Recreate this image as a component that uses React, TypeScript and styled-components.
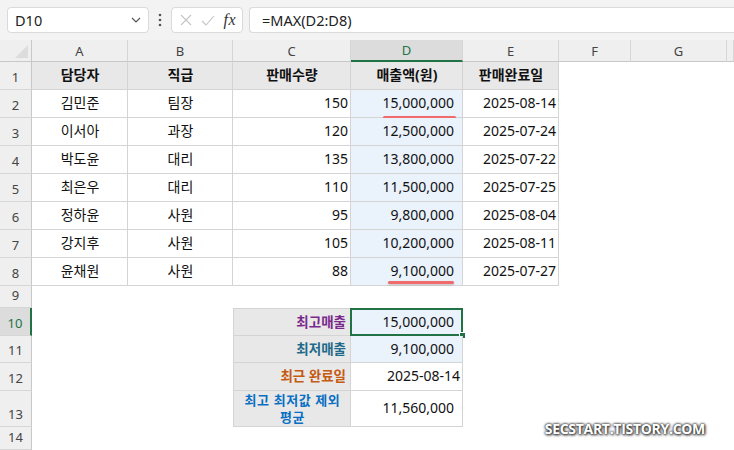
import React from "react";
import styled, { createGlobalStyle, css } from "styled-components";

const GlobalStyle = createGlobalStyle`
  html, body {
    margin: 0;
    padding: 0;
    background: #ffffff;
    overflow: hidden;
  }
  body {
    font-family: "Noto Sans", "Noto Sans CJK KR", sans-serif;
  }
`;

const GREEN = "#217346";
const LINE = "#d4d4d4";

const Page = styled.div`
  position: relative;
  width: 734px;
  height: 450px;
  display: flex;
  flex-direction: column;
  background: #ffffff;
`;

const Toolbar = styled.div`
  height: 40px;
  flex: none;
  display: flex;
  align-items: center;
  padding: 0 0 0 7px;
  background: #f3f3f3;
  box-sizing: border-box;
`;

const Box = styled.div<{ $w?: number }>`
  height: 26px;
  box-sizing: border-box;
  background: #ffffff;
  border: 1px solid #dadada;
  border-radius: 4px;
  display: flex;
  align-items: center;
  ${(p) =>
    p.$w
      ? css`
          width: ${p.$w}px;
          flex: none;
        `
      : css`
          flex: 1;
          border-right: none;
          border-radius: 4px 0 0 4px;
        `}
`;

const NameBox = styled(Box)`
  justify-content: space-between;
  padding: 0 7px 0 7px;
  font-size: 14.5px;
  color: #222;
`;

const Dots = styled.div`
  width: 22px;
  display: flex;
  justify-content: center;
`;

const EditBox = styled(Box)`
  justify-content: space-between;
  padding: 0 6px 0 8px;
  margin-right: 6px;
`;

const Fx = styled.span`
  font-family: "Liberation Serif", serif;
  font-style: italic;
  font-size: 16px;
  color: #333;
  letter-spacing: 0.5px;
`;

const FormulaBox = styled(Box)`
  padding-left: 12px;
  font-size: 14.5px;
  color: #222;
`;

const Sheet = styled.div`
  flex: 1;
  display: grid;
  grid-template-columns: 32px 96px 105px 118px 112px 96px 72px 96px 1fr;
  grid-template-rows: 22px repeat(8, 28px) 22px 28px 27px 28px 36px 1fr;
  background: #ffffff;
`;

const Corner = styled.div`
  background: #efefef;
  border-right: 1px solid #c8c8c8;
  border-bottom: 1px solid #c8c8c8;
  box-sizing: border-box;
  position: relative;
  &::after {
    content: "";
    position: absolute;
    right: 3px;
    bottom: 3px;
    width: 0;
    height: 0;
    border-left: 13px solid transparent;
    border-bottom: 13px solid #dcdcdc;
  }
`;

const ColHeader = styled.div<{ $active?: boolean }>`
  box-sizing: border-box;
  display: flex;
  align-items: center;
  justify-content: center;
  font-size: 13px;
  color: ${(p) => (p.$active ? GREEN : "#444")};
  background: ${(p) => (p.$active ? "#dcdcdc" : "#efefef")};
  border-right: 1px solid #d6d6d6;
  border-bottom: ${(p) => (p.$active ? `2px solid ${GREEN}` : "1px solid #c8c8c8")};
`;

const RowHeader = styled.div<{ $active?: boolean; $row: number }>`
  grid-column: 1;
  grid-row: ${(p) => p.$row};
  box-sizing: border-box;
  display: flex;
  align-items: flex-end;
  justify-content: center;
  padding-bottom: 3px;
  font-size: 13px;
  color: ${(p) => (p.$active ? GREEN : "#444")};
  background: ${(p) => (p.$active ? "#dcdcdc" : "#efefef")};
  border-bottom: 1px solid #d6d6d6;
  border-right: ${(p) => (p.$active ? `2px solid ${GREEN}` : "1px solid #c8c8c8")};
`;

const Table = styled.div<{
  $col: string;
  $row: string;
  $cols: string;
  $rows: string;
  $edge?: boolean;
}>`
  grid-column: ${(p) => p.$col};
  grid-row: ${(p) => p.$row};
  display: grid;
  grid-template-columns: ${(p) => p.$cols};
  grid-template-rows: ${(p) => p.$rows};
  ${(p) =>
    p.$edge &&
    css`
      border-top: 1px solid ${LINE};
      border-left: 1px solid ${LINE};
    `}
`;

type Align = "left" | "center" | "right";

const Cell = styled.div<{
  $align?: Align;
  $bg?: string;
  $bold?: boolean;
  $color?: string;
  $size?: number;
  $pad?: number;
  $selected?: boolean;
}>`
  position: relative;
  box-sizing: border-box;
  display: flex;
  align-items: center;
  justify-content: ${(p) =>
    p.$align === "right" ? "flex-end" : p.$align === "left" ? "flex-start" : "center"};
  text-align: ${(p) => p.$align || "center"};
  padding: 0 ${(p) => p.$pad ?? 2}px 0 3px;
  font-size: ${(p) => p.$size || 14}px;
  line-height: 1.2;
  font-weight: ${(p) => (p.$bold ? 700 : 400)};
  color: ${(p) => p.$color || "#111"};
  background: ${(p) => p.$bg || "#ffffff"};
  border-right: 1px solid ${LINE};
  border-bottom: 1px solid ${LINE};
  white-space: nowrap;
  ${(p) =>
    p.$selected &&
    css`
      &::before {
        content: "";
        position: absolute;
        left: -1px;
        top: -1px;
        right: -1px;
        bottom: -1px;
        border: 2px solid ${GREEN};
      }
      &::after {
        content: "";
        position: absolute;
        right: -4px;
        bottom: -4px;
        width: 5px;
        height: 5px;
        background: ${GREEN};
        border: 1px solid #ffffff;
      }
    `}
`;

const Wrapped = styled.span`
  white-space: normal;
  line-height: 17px;
  letter-spacing: 0.6px;
`;

const Mark = styled.div<{ $left: number; $right: number; $bottom: number }>`
  position: absolute;
  left: ${(p) => p.$left}px;
  right: ${(p) => p.$right}px;
  bottom: ${(p) => p.$bottom}px;
  height: 3px;
  border-radius: 2px;
  background: #f06b6b;
  box-shadow: 0 1px 2px rgba(120, 40, 40, 0.25);
`;

const Watermark = styled.div`
  position: absolute;
  right: 29px;
  bottom: 12px;
  font-family: "Open Sans", "Noto Sans", sans-serif;
  font-weight: 700;
  font-size: 14px;
  letter-spacing: -0.3px;
  color: #ffffff;
  text-shadow: 0 0 2px #333, 0 0 3px #333, 1px 1px 3px #222;
`;

const HEAD_BG = "#e8e8e8";
const BLUE_BG = "#eaf2fc";

const columns = ["A", "B", "C", "D", "E", "F", "G"];

const rows = [
  ["김민준", "팀장", "150", "15,000,000", "2025-08-14"],
  ["이서아", "과장", "120", "12,500,000", "2025-07-24"],
  ["박도윤", "대리", "135", "13,800,000", "2025-07-22"],
  ["최은우", "대리", "110", "11,500,000", "2025-07-25"],
  ["정하윤", "사원", "95", "9,800,000", "2025-08-04"],
  ["강지후", "사원", "105", "10,200,000", "2025-08-11"],
  ["윤채원", "사원", "88", "9,100,000", "2025-07-27"],
];

const marks: Record<number, { left: number; right: number; bottom: number }> = {
  0: { left: 32, right: 6, bottom: -2 },
  6: { left: 37, right: 8, bottom: 1 },
};

const summary = [
  { label: "최고매출", color: "#7a2a8c", value: "15,000,000", pad: 8, bg: BLUE_BG, selected: true },
  { label: "최저매출", color: "#1f6a8a", value: "9,100,000", pad: 8, bg: BLUE_BG },
  { label: "최근 완료일", color: "#c55a11", value: "2025-08-14", pad: 2 },
];

function Chevron() {
  return (
    <svg width="10" height="6" viewBox="0 0 10 6">
      <path d="M1 1 L5 5 L9 1" fill="none" stroke="#555" strokeWidth="1.2" />
    </svg>
  );
}

function VDots() {
  return (
    <svg width="4" height="14" viewBox="0 0 4 14">
      <circle cx="2" cy="2" r="1.3" fill="#555" />
      <circle cx="2" cy="7" r="1.3" fill="#555" />
      <circle cx="2" cy="12" r="1.3" fill="#555" />
    </svg>
  );
}

function Cross() {
  return (
    <svg width="12" height="12" viewBox="0 0 12 12">
      <path d="M1 1 L11 11 M11 1 L1 11" stroke="#c4c4c4" strokeWidth="1.1" />
    </svg>
  );
}

function Check() {
  return (
    <svg width="14" height="11" viewBox="0 0 14 11">
      <path d="M1 6 L5 10 L13 1" fill="none" stroke="#c4c4c4" strokeWidth="1.1" />
    </svg>
  );
}

export default function App() {
  const rowNums = Array.from({ length: 14 }, (_, i) => i + 1);
  return (
    <Page>
      <GlobalStyle />
      <Toolbar>
        <NameBox $w={142}>
          <span>D10</span>
          <Chevron />
        </NameBox>
        <Dots>
          <VDots />
        </Dots>
        <EditBox $w={72}>
          <Cross />
          <Check />
          <Fx>fx</Fx>
        </EditBox>
        <FormulaBox>=MAX(D2:D8)</FormulaBox>
      </Toolbar>

      <Sheet>
        <Corner />
        {columns.map((c) => (
          <ColHeader key={c} $active={c === "D"}>
            {c}
          </ColHeader>
        ))}
        <ColHeader />

        {rowNums.map((n) => (
          <RowHeader key={n} $row={n + 1} $active={n === 10}>
            {n}
          </RowHeader>
        ))}

        <Table $col="2 / 7" $row="2 / 10" $cols="96px 105px 118px 112px 96px" $rows="repeat(8, 28px)">
          {["담당자", "직급", "판매수량", "매출액(원)", "판매완료일"].map((h) => (
            <Cell key={h} $bg={HEAD_BG} $bold>
              {h}
            </Cell>
          ))}
          {rows.map((r, i) => (
            <React.Fragment key={r[0]}>
              <Cell>{r[0]}</Cell>
              <Cell>{r[1]}</Cell>
              <Cell $align="right">{r[2]}</Cell>
              <Cell $align="right" $bg={BLUE_BG} $pad={8}>
                {r[3]}
                {marks[i] && (
                  <Mark $left={marks[i].left} $right={marks[i].right} $bottom={marks[i].bottom} />
                )}
              </Cell>
              <Cell $align="right">{r[4]}</Cell>
            </React.Fragment>
          ))}
        </Table>

        <Table
          $col="4 / 6"
          $row="11 / 15"
          $cols="117px 112px"
          $rows="27px 27px 28px 36px"
          $edge
        >
          {summary.map((s) => (
            <React.Fragment key={s.label}>
              <Cell $align="right" $bg={HEAD_BG} $bold $color={s.color} $size={13.5} $pad={4}>
                {s.label}
              </Cell>
              <Cell $align="right" $bg={s.bg} $pad={s.pad} $selected={s.selected}>
                {s.value}
              </Cell>
            </React.Fragment>
          ))}
          <Cell $bg={HEAD_BG} $bold $color="#0a6fc2" $size={13}>
            <Wrapped>
              최고 최저값 제외
              <br />
              평균
            </Wrapped>
          </Cell>
          <Cell $align="right" $pad={8}>
            11,560,000
          </Cell>
        </Table>
      </Sheet>

      <Watermark>SECSTART.TISTORY.COM</Watermark>
    </Page>
  );
}
